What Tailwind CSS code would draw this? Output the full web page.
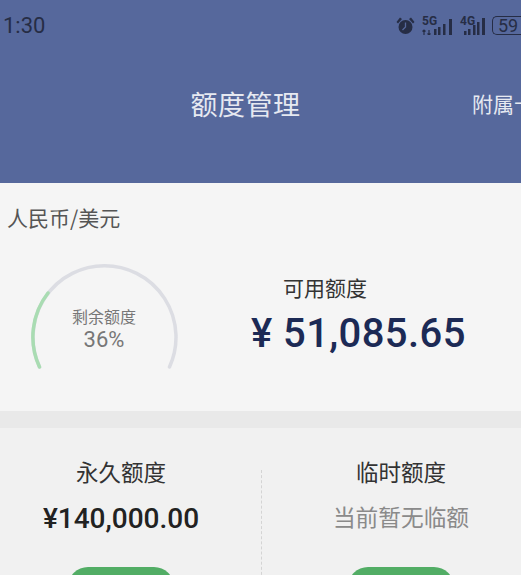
<!DOCTYPE html>
<html><head><meta charset="utf-8">
<script src="https://cdn.jsdelivr.net/npm/@tailwindcss/browser@4"></script>
</head>
<body class="m-0">
<div class="w-[521px] h-[575px] overflow-hidden bg-[#f1f1f1] font-['Noto_Sans_CJK_SC','Noto_Sans',sans-serif]">
  <header class="h-[183px] bg-[#56689c] flex flex-col">
    <div class="h-[50px] flex items-center justify-between pl-[3px]">
      <span class="text-[22px] text-[#262d45] font-['Roboto',sans-serif]">1:30</span>
      <div class="flex items-center gap-[7px] text-[#262d45] pt-[1px]">
        <svg width="19" height="18" viewBox="0 0 19 18" fill="#262d45"><circle cx="9.5" cy="10" r="7"/><path d="M0.5 5 L4 0.5 L6 2 L2 6.5Z M18.5 5 L15 0.5 L13 2 L17 6.5Z"/><path d="M9.5 5.5v4.5l-3 3" stroke="#56689c" stroke-width="1.3" fill="none"/></svg>
        <div class="relative w-[31px] h-[18px]">
          <span class="absolute left-0 top-[-3px] text-[12px] leading-[14px] font-bold font-['Roboto',sans-serif]">5G</span>
          <svg class="absolute left-0 top-0" width="31" height="18" fill="#262d45"><path d="M2 18v-5m-1.5 1.5l1.5-1.5 1.5 1.5M7 13v5m-1.5-1.5l1.5 1.5 1.5-1.5" stroke="#262d45" stroke-width="1.2" fill="none"/><rect x="12" y="12" width="2.5" height="6"/><rect x="16" y="10" width="2.5" height="8"/><rect x="21" y="7" width="2.5" height="11"/><rect x="27" y="2" width="3" height="16"/></svg>
        </div>
        <div class="relative w-[25px] h-[18px]">
          <span class="absolute left-0 top-[-3px] text-[12px] leading-[14px] font-bold font-['Roboto',sans-serif]">4G</span>
          <svg class="absolute left-0 top-0" width="25" height="18" fill="#262d45"><rect x="4" y="14" width="2.5" height="4"/><rect x="8" y="12" width="2.5" height="6"/><rect x="13" y="8" width="2.5" height="10"/><rect x="17" y="5" width="2.5" height="13"/><rect x="22" y="1" width="3" height="17"/></svg>
        </div>
        <div class="w-[29px] h-[19px] border-[1.5px] border-r-0 border-[#262d45] rounded-l-[5px] flex items-center pl-[5px] text-[18px] leading-none font-['Roboto',sans-serif] overflow-hidden">59</div>
      </div>
    </div>
    <div class="relative h-[108px] flex items-center justify-center">
      <h1 class="text-[27px] font-normal pr-[30px] tracking-[0.5px] text-[#e6e9f1]">额度管理</h1>
      <span class="absolute left-[472px] top-[38px] text-[21px] whitespace-nowrap text-[#e6e9f1]">附属卡</span>
    </div>
  </header>
  <section class="h-[228px] bg-[#f5f5f5] px-[7px] pt-[20px]">
    <div class="text-[21px] leading-[29px] text-[#555]">人民币/美元</div>
    <div class="flex mt-[31px]">
      <div class="relative w-[170px] h-[106px] ml-[23px] shrink-0">
        <svg class="absolute left-0 top-0" width="150" height="106" viewBox="0 0 150 106" fill="none">
          <path d="M9.5 104 A 71.5 71.5 0 1 1 139.5 104" stroke="#dcdde3" stroke-width="3.5" stroke-linecap="round"/>
          <path d="M9.5 104 A 71.5 71.5 0 0 1 18 30" stroke="#a9dcb2" stroke-width="3.5" stroke-linecap="round"/>
        </svg>
        <div class="absolute left-0 top-[41px] w-[148px] text-center text-[#777]">
          <div class="text-[16px] leading-[24px]">剩余额度</div>
          <div class="text-[22px] leading-[24px] font-['Roboto',sans-serif]">36%</div>
        </div>
      </div>
      <div class="flex flex-col ml-[51px] pt-[10px]">
        <div class="ml-[32px] text-[21px] leading-[28px] text-[#333]">可用额度</div>
        <div class="mt-[8px] whitespace-nowrap text-[40px] leading-[50px] font-medium text-[#1c2a55] font-['Roboto',sans-serif] tracking-[0.4px]">¥ 51,085.65</div>
      </div>
    </div>
  </section>
  <div class="h-[17px] bg-[#e9e9e9]"></div>
  <section class="flex pt-[27px]">
    <div class="w-[261px] pr-[19px] flex flex-col items-center">
      <div class="text-[22.5px] leading-[32px] text-[#333]">永久额度</div>
      <div class="mt-[14px] text-[28px] leading-[36px] font-medium text-[#222] font-['Roboto',sans-serif]">¥140,000.00</div>
      <div class="mt-[30px] w-[106px] h-[40px] rounded-[20px] bg-[#52ad65]"></div>
    </div>
    <div class="w-px h-[110px] mt-[15px] border-l border-dashed border-[#d4d4d4] shrink-0"></div>
    <div class="flex-1 pl-[19px] flex flex-col items-center">
      <div class="text-[22.5px] leading-[32px] text-[#333]">临时额度</div>
      <div class="mt-[12px] text-[22.7px] leading-[36px] text-[#8a8a8a]">当前暂无临额</div>
      <div class="mt-[32px] w-[106px] h-[40px] rounded-[20px] bg-[#52ad65]"></div>
    </div>
  </section>
</div>
</body></html>
